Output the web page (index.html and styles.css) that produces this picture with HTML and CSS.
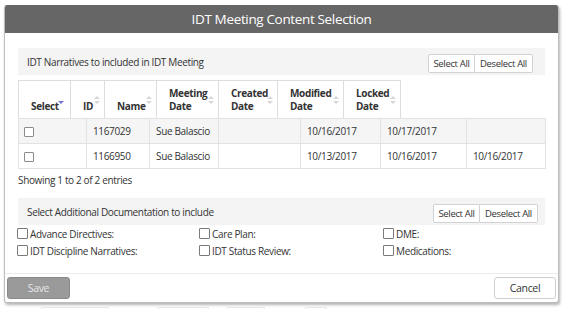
FILE: index.html
```html
<!DOCTYPE html>
<html>
<head>
  <meta charset="UTF-8">
  <title>IDT Meeting Content Selection</title>
  <link rel="stylesheet" href="styles.css">
</head>
<body>
  <div class="modal">
    <div class="modal-header">IDT Meeting Content Selection</div>

    <div class="modal-body">
      <div class="panel">
        <span class="panel-title">IDT Narratives to included in IDT Meeting</span>
        <div class="btn-group">
          <button class="btn btn-sel">Select All</button><button class="btn btn-desel">Deselect All</button>
        </div>
      </div>

      <table class="dt dt-head">
        <colgroup>
          <col style="width:52px"><col style="width:34px"><col style="width:52px"><col style="width:62px">
          <col style="width:59px"><col style="width:66px"><col style="width:57px">
        </colgroup>
        <tr>
          <th>Select<span class="sort sort-desc"></span></th>
          <th>ID<span class="sort"></span></th>
          <th>Name<span class="sort"></span></th>
          <th>Meeting<br>Date<span class="sort"></span></th>
          <th>Created<br>Date<span class="sort"></span></th>
          <th>Modified<br>Date<span class="sort"></span></th>
          <th>Locked<br>Date<span class="sort"></span></th>
        </tr>
      </table>

      <table class="dt dt-body">
        <colgroup>
          <col style="width:68px"><col style="width:63px"><col style="width:69px"><col style="width:82px">
          <col style="width:80px"><col style="width:86px"><col style="width:79px">
        </colgroup>
        <tr class="odd">
          <td><input type="checkbox" class="chk"></td>
          <td>1167029</td>
          <td>Sue Balascio</td>
          <td></td>
          <td>10/16/2017</td>
          <td>10/17/2017</td>
          <td></td>
        </tr>
        <tr>
          <td><input type="checkbox" class="chk"></td>
          <td>1166950</td>
          <td>Sue Balascio</td>
          <td></td>
          <td>10/13/2017</td>
          <td>10/16/2017</td>
          <td>10/16/2017</td>
        </tr>
      </table>

      <div class="dt-info">Showing 1 to 2 of 2 entries</div>

      <div class="panel panel-docs">
        <span class="panel-title">Select Additional Documentation to include</span>
        <div class="btn-group">
          <button class="btn btn-sel">Select All</button><button class="btn btn-desel">Deselect All</button>
        </div>
      </div>

      <div class="doc-grid">
        <label><input type="checkbox" class="chk">Advance Directives:</label>
        <label><input type="checkbox" class="chk">Care Plan:</label>
        <label><input type="checkbox" class="chk">DME:</label>
        <label><input type="checkbox" class="chk">IDT Discipline Narratives:</label>
        <label><input type="checkbox" class="chk">IDT Status Review:</label>
        <label><input type="checkbox" class="chk">Medications:</label>
      </div>
    </div>

    <div class="modal-footer">
      <button class="btn-save">Save</button>
      <button class="btn-cancel">Cancel</button>
    </div>
  </div>

  <div class="page-under">
    <span class="under-box w66"></span>
    <span class="under-box w50"></span>
    <span class="under-box w37"></span>
    <span class="under-box w20"></span>
  </div>
</body>
</html>
```

FILE: styles.css
```css
body {
  margin: 0;
  background: #fff;
  font-family: "Open Sans", "Noto Sans", sans-serif;
  font-size: 10px;
  letter-spacing: -0.35px;
  color: #333;
}
button, input {
  font-family: inherit;
  letter-spacing: inherit;
}

.modal {
  width: 555px;
  margin: 5px 0 0 4px;
  box-sizing: border-box;
  background: #fff;
  border: 1px solid #bdbdbd;
  border-top: 0;
  border-radius: 3px;
  box-shadow: 1px 2px 3px rgba(0,0,0,0.3);
  overflow: hidden;
}
.modal-header {
  height: 28px;
  line-height: 28px;
  background: #666;
  color: #fff;
  font-size: 13.5px;
  text-align: center;
}
.modal-body {
  padding: 15px 13px 14px 13px;
}

.panel {
  display: flex;
  justify-content: space-between;
  align-items: center;
  height: 27px;
  padding: 0 12px 0 9px;
  background: #f4f4f4;
}
.panel-docs {
  margin-top: 11px;
  padding-right: 7px;
}
.btn-group {
  display: flex;
  align-self: flex-end;
  margin-bottom: 2px;
}
.btn {
  height: 19px;
  padding: 0;
  background: #fff;
  border: 1px solid #d2d2d2;
  border-radius: 2px;
  font-size: 9.5px;
  color: #333;
}
.btn-sel {
  width: 47px;
  border-top-right-radius: 0;
  border-bottom-right-radius: 0;
}
.btn-desel {
  width: 58px;
  border-left: 0;
  border-top-left-radius: 0;
  border-bottom-left-radius: 0;
}

.dt {
  border-collapse: collapse;
  table-layout: fixed;
}
.dt-head {
  width: 382px;
  margin-top: 5px;
}
.dt-head th {
  position: relative;
  height: 32px;
  padding: 0 10px 5px 12px;
  border: 1px solid #ddd;
  border-bottom: 0;
  text-align: left;
  vertical-align: bottom;
  font-weight: bold;
  line-height: 13px;
}
.sort {
  position: absolute;
  right: 4px;
  top: 15px;
  width: 0;
  height: 0;
}
.sort:before, .sort:after {
  content: "";
  position: absolute;
  left: -6px;
  border-left: 3px solid transparent;
  border-right: 3px solid transparent;
}
.sort:before {
  top: 0;
  border-bottom: 3px solid #d6d6d6;
}
.sort:after {
  top: 5px;
  border-top: 3px solid #d6d6d6;
}
.sort-desc {
  right: 6px;
}
.sort-desc:before {
  display: none;
}
.sort-desc:after {
  border-top-color: #7474d4;
}

.dt-body {
  width: 527px;
}
.dt-body td {
  height: 24px;
  padding: 0 6px;
  border: 1px solid #e2e2e2;
  vertical-align: middle;
  white-space: nowrap;
}
.dt-body tr.odd td {
  background: #f5f5f5;
}
.chk {
  -webkit-appearance: none;
  appearance: none;
  display: inline-block;
  width: 10px;
  height: 10px;
  margin: 0;
  border: 1px solid #8c8c8c;
  border-radius: 1px;
  background: #fff;
  vertical-align: middle;
}
.dt-body .chk {
  margin-left: -1px;
}

.dt-info {
  margin-top: 4px;
  line-height: 14px;
}

.doc-grid {
  display: grid;
  grid-template-columns: 182px 184px 150px;
  grid-auto-rows: 17px;
  margin-left: -1px;
}
.doc-grid label {
  display: flex;
  align-items: center;
  gap: 2px;
}
.doc-grid .chk {
  width: 11px;
  height: 11px;
  border-color: #7a7a7a;
}

.modal-footer {
  display: flex;
  justify-content: space-between;
  padding: 3px 2px 3px 2px;
  border-top: 1px solid #ececec;
}
.btn-save {
  width: 63px;
  height: 22px;
  background: #9a9a9a;
  border: 1px solid #8a8a8a;
  border-radius: 3px;
  color: #e6e6e6;
  font-size: 10.5px;
}
.btn-cancel {
  width: 62px;
  height: 22px;
  background: #fff;
  border: 1px solid #cfcfcf;
  border-radius: 3px;
  color: #333;
  font-size: 10.5px;
}

.page-under {
  display: flex;
  margin-top: 4px;
  padding-left: 41px;
}
.under-box {
  height: 10px;
  border: 1px solid #e6e6e6;
  border-bottom: 0;
  border-radius: 2px;
}
.w66 { width: 66px; margin-right: 48px; }
.w50 { width: 50px; margin-right: 17px; }
.w37 { width: 37px; margin-right: 40px; }
.w20 { width: 20px; }
```
